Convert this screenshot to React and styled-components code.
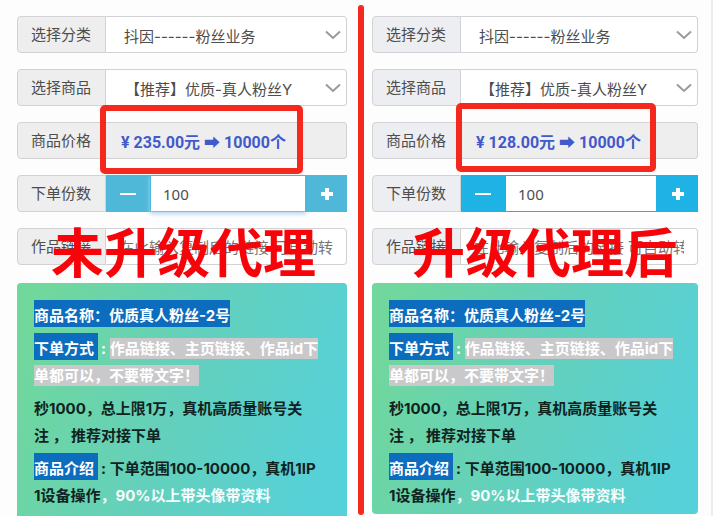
/**
 *
 * Agent price comparison
 *
 */

import React, { useId, useState } from 'react';
import styled, { createGlobalStyle, css } from 'styled-components';

const GlobalStyle = createGlobalStyle`
  *,
  *::before,
  *::after {
    box-sizing: border-box;
  }

  body {
    margin: 0;
    background-color: #fdfdfd;
    color: #4d4d4d;
    font-family: 'Noto Sans', 'Noto Sans CJK SC', sans-serif;
    font-size: 15px;
  }
`;

const plans = [
  {
    title: '未升级代理',
    price: '235.00',
    accent: '#4fb8d9',
    addon: '#eeeeee',
    focused: true,
  },
  {
    title: '升级代理后',
    price: '128.00',
    accent: '#1fb2e5',
    addon: '#eceef1',
    focused: false,
  },
];

function Chevron() {
  return (
    <ChevronIcon viewBox="0 0 16 10" aria-hidden="true">
      <path d="M1 1.5 L8 8 L15 1.5" />
    </ChevronIcon>
  );
}

function SelectRow({ label, value, indent }) {
  const id = useId();
  return (
    <Row>
      <Addon htmlFor={id}>{label}</Addon>
      <SelectWrap>
        <Select id={id} $indent={indent}>
          <option>{value}</option>
        </Select>
        <Chevron />
      </SelectWrap>
    </Row>
  );
}

function OrderPanel({ plan, after }) {
  const [count, setCount] = useState(100);
  const countId = useId();
  const linkId = useId();

  return (
    <Panel $after={after} $addon={plan.addon}>
      <SelectRow label="选择分类" value="抖因------粉丝业务" />
      <SelectRow label="选择商品" value="【推荐】优质-真人粉丝Y" indent />
      <Row>
        <Addon as="span">商品价格</Addon>
        <Price>¥ {plan.price}元 ➡ 10000个</Price>
        <Frame $after={after} />
      </Row>
      <Row>
        <Addon htmlFor={countId}>下单份数</Addon>
        <StepButton
          type="button"
          aria-label="减少"
          $color={plan.accent}
          onClick={() => setCount(Math.max(0, count - 1))}
        >
          <svg width="16" height="14" viewBox="0 0 16 14">
            <path d="M0 7H16" stroke="#fff" strokeWidth="2" />
          </svg>
        </StepButton>
        <CountInput
          id={countId}
          value={count}
          onChange={e => setCount(Number(e.target.value) || 0)}
          $color={plan.accent}
          $focused={plan.focused}
        />
        <StepButton
          type="button"
          aria-label="增加"
          $color={plan.accent}
          $last
          onClick={() => setCount(count + 1)}
        >
          <svg width="12" height="12" viewBox="0 0 12 12">
            <path d="M0 6H12M6 0V12" stroke="#fff" strokeWidth="4" />
          </svg>
        </StepButton>
      </Row>
      <Row>
        <Addon htmlFor={linkId}>作品链接</Addon>
        <LinkInput
          id={linkId}
          placeholder="在此输入复制后的链接 可自动转换"
        />
        <Title $after={after}>{plan.title}</Title>
      </Row>
      <Card $after={after}>
        <Paragraph>
          <Mark>商品名称：优质真人粉丝-2号</Mark>
        </Paragraph>
        <Paragraph $light>
          <Mark>下单方式&nbsp;</Mark>&nbsp;:&nbsp;
          <Note>
            作品链接、主页链接、作品id下
            <br />
            单都可以，不要带文字！
          </Note>
        </Paragraph>
        <Paragraph>
          秒1000，总上限1万，真机高质量账号关
          <br />注 ， 推荐对接下单
        </Paragraph>
        <Paragraph>
          <Mark>商品介绍&nbsp;</Mark>&nbsp;: 下单范围100-10000，真机1IP
          <br />
          1设备操作<Light>，90%以上带头像带资料</Light>
        </Paragraph>
      </Card>
    </Panel>
  );
}

function App() {
  return (
    <>
      <GlobalStyle />
      <Main>
        <OrderPanel plan={plans[0]} />
        <Divider />
        <OrderPanel plan={plans[1]} after />
      </Main>
    </>
  );
}

const Main = styled.main`
  display: grid;
  grid-template-columns: minmax(0, 358fr) 6px minmax(0, 349fr);
  min-height: 100vh;
`;

const Divider = styled.div`
  margin: 5px 0 1px;
  border-radius: 3px;
  background-color: #f4281c;
`;

const Panel = styled.section`
  --addon: ${props => props.$addon};
  display: flex;
  flex-direction: column;
  gap: 16px;
  padding: ${props => (props.$after ? '16px 13px 2px 8px' : '16px 11px 0 17px')};
  ${props =>
    props.$after &&
    css`
      border-right: 2px solid #ececee;
    `}
`;

const Row = styled.div`
  position: relative;
  display: flex;
  height: 37px;
`;

const Addon = styled.label`
  flex: none;
  display: flex;
  align-items: center;
  width: 89px;
  padding: 0 0 2px 13px;
  border: 1px solid #d2d2d4;
  border-radius: 4px 0 0 4px;
  background-color: var(--addon);
`;

const FieldStyle = css`
  flex: 1;
  min-width: 0;
  width: 100%;
  height: 100%;
  border: 1px solid #d2d2d4;
  border-left: none;
  border-radius: 0 4px 4px 0;
  background-color: #fff;
  color: inherit;
  font: inherit;
  :focus {
    outline: none;
  }
`;

const SelectWrap = styled.div`
  position: relative;
  flex: 1;
  min-width: 0;
`;

const Select = styled.select`
  ${FieldStyle}
  appearance: none;
  padding: 4px 24px 0 ${props => (props.$indent ? '19px' : '18px')};
  font-family: Inter, 'Noto Sans CJK SC', sans-serif;
`;

const ChevronIcon = styled.svg`
  position: absolute;
  top: 14px;
  right: 6px;
  width: 16px;
  height: 10px;
  fill: none;
  stroke: #9a9a9a;
  stroke-width: 2;
  pointer-events: none;
`;

const Price = styled.output`
  ${FieldStyle}
  display: flex;
  align-items: center;
  padding-left: 15px;
  background-color: #eeeeee;
  color: #4259cb;
  font-family: Roboto, 'Noto Sans CJK SC', sans-serif;
  font-size: 16px;
  font-weight: 700;
  white-space: nowrap;
`;

const Frame = styled.div`
  position: absolute;
  top: ${props => (props.$after ? '-19px' : '-17px')};
  left: ${props => (props.$after ? '84px' : '83px')};
  width: ${props => (props.$after ? '200px' : '203px')};
  height: 69px;
  border: 6px solid #f4281c;
  border-radius: 5px;
  pointer-events: none;
`;

const StepButton = styled.button`
  flex: none;
  display: flex;
  align-items: center;
  justify-content: center;
  width: ${props => (props.$last ? '41px' : '44px')};
  padding: 0;
  border: none;
  background-color: ${props => props.$color};
  cursor: pointer;
`;

const CountInput = styled.input`
  ${FieldStyle}
  padding: 0 12px;
  border: 1px solid ${props => props.$color};
  border-radius: 0;
  ${props =>
    props.$focused &&
    css`
      border-bottom-color: #86b7dd;
      box-shadow: 0 2px 4px #b5d5ec;
    `}
`;

const LinkInput = styled.input`
  ${FieldStyle}
  padding: 0 13px;
  ::placeholder {
    color: #999;
    opacity: 1;
  }
`;

const Title = styled.h2`
  position: absolute;
  top: -7px;
  left: ${props => (props.$after ? '40px' : '34px')};
  margin: 0;
  color: #f60409;
  font-family: 'Noto Sans CJK SC', sans-serif;
  font-size: 53px;
  font-weight: 700;
  line-height: 58px;
  white-space: nowrap;
  pointer-events: none;
`;

const Card = styled.article`
  flex: 1;
  display: flex;
  flex-direction: column;
  gap: 6px;
  margin-top: 2px;
  padding: 19px 17px 5px;
  border-radius: ${props => (props.$after ? '4px' : '4px 4px 0 0')};
  background: linear-gradient(110deg, #70d79d 8%, #63d0bd 50%, #56d1d9 92%);
  color: #10231f;
  font-family: Inter, 'Noto Sans CJK SC', sans-serif;
  font-weight: 700;
  line-height: 27px;
  white-space: nowrap;
`;

const Paragraph = styled.p`
  margin: 0;
  ${props =>
    props.$light &&
    css`
      color: #fff;
    `}
`;

const Mark = styled.span`
  padding: 6px 0 2px;
  background-color: #0c6cbd;
  color: #fff;
`;

const Note = styled.span`
  padding: 1px 0;
  background-color: #c9c9cb;
`;

const Light = styled.span`
  color: #f4fffd;
`;

export default App;
